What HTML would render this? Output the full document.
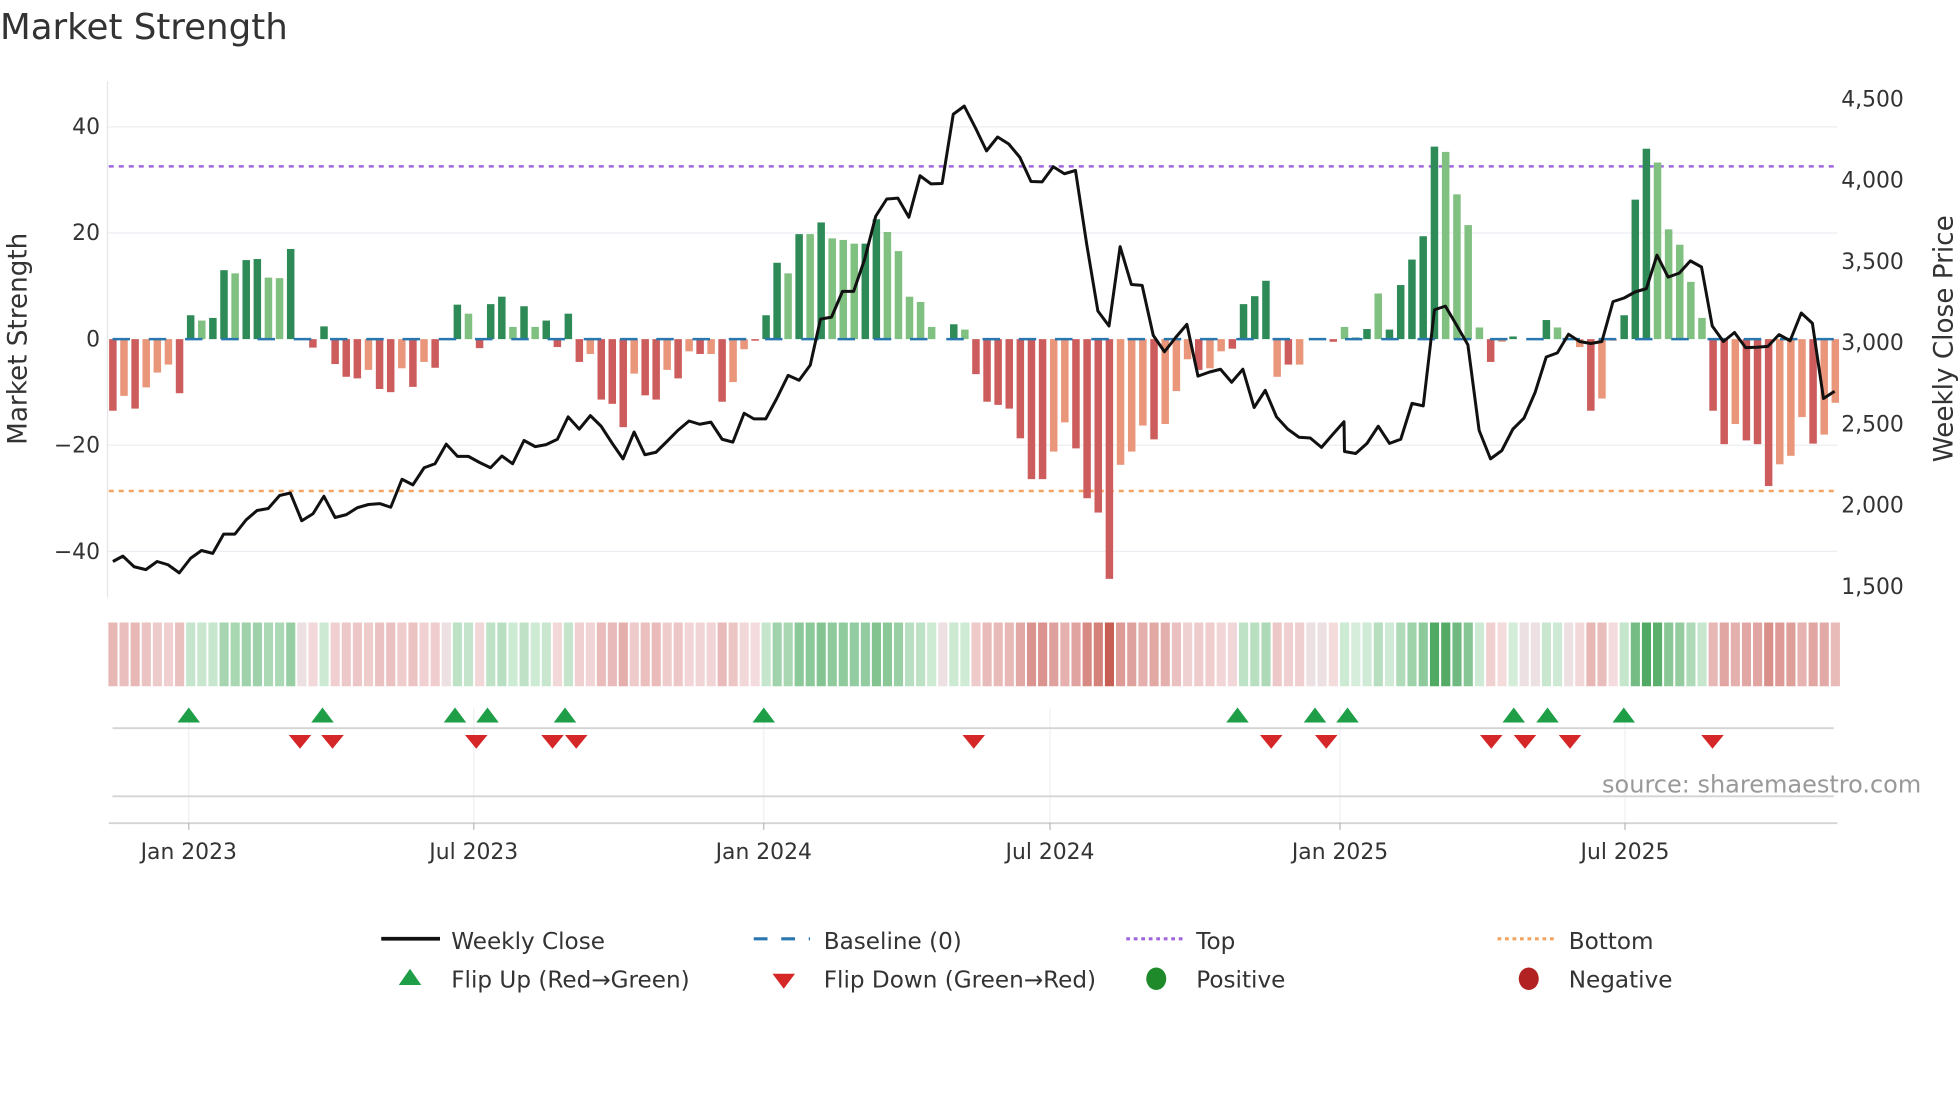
<!DOCTYPE html>
<html><head><meta charset="utf-8"><style>
html,body{margin:0;padding:0;background:#fff;width:1960px;height:1102px;overflow:hidden}
svg{display:block;font-family:"DejaVu Sans","Liberation Sans",sans-serif}
</style></head><body>
<svg id="c" width="1960" height="1102" viewBox="0 0 1568 881.6" xmlns="http://www.w3.org/2000/svg">
<rect width="1568" height="881.6" fill="#fff"/>
<text x="0" y="31" font-size="28.5" fill="#333">Market Strength</text>
<g stroke="#eceef2" stroke-width="1">
<line x1="86" y1="101.5" x2="1470" y2="101.5"/>
<line x1="86" y1="186.4" x2="1470" y2="186.4"/>
<line x1="86" y1="356.2" x2="1470" y2="356.2"/>
<line x1="86" y1="441.1" x2="1470" y2="441.1"/>
</g>
<line x1="86" y1="65" x2="86" y2="478" stroke="#e6e6e6"/>
<g font-size="17.5" fill="#333" text-anchor="end">
<text x="80" y="107">40</text><text x="80" y="192">20</text><text x="80" y="277">0</text>
<text x="80" y="362">−20</text><text x="80" y="447">−40</text>
</g>
<g font-size="17.5" fill="#333">
<text x="1473" y="85">4,500</text><text x="1473" y="150">4,000</text><text x="1473" y="215">3,500</text>
<text x="1473" y="280">3,000</text><text x="1473" y="345">2,500</text><text x="1473" y="410">2,000</text>
<text x="1473" y="475">1,500</text>
</g>
<text transform="translate(21,271) rotate(-90)" font-size="21" fill="#333" text-anchor="middle">Market Strength</text>
<text transform="translate(1562,271) rotate(-90)" font-size="21" fill="#333" text-anchor="middle">Weekly Close Price</text>
<line x1="87" y1="133.1" x2="1470" y2="133.1" stroke="#a066dd" stroke-width="2" stroke-dasharray="4 4"/>
<line x1="87" y1="392.8" x2="1470" y2="392.8" stroke="#f4a460" stroke-width="2" stroke-dasharray="4 4"/>
<g id="bars"></g>
<line x1="90" y1="271.3" x2="1470" y2="271.3" stroke="#2a77b0" stroke-width="2" stroke-dasharray="14 15"/>
<polyline id="price" fill="none" stroke="#111" stroke-width="2.4" stroke-linejoin="round"/>
<g id="strip"></g>
<g stroke="#eef0f3" stroke-width="1">
<line x1="151" y1="566" x2="151" y2="657"/><line x1="379" y1="566" x2="379" y2="657"/>
<line x1="611" y1="566" x2="611" y2="657"/><line x1="840" y1="566" x2="840" y2="657"/>
<line x1="1072" y1="566" x2="1072" y2="657"/><line x1="1300" y1="566" x2="1300" y2="657"/>
</g>
<line x1="90" y1="582.5" x2="1467" y2="582.5" stroke="#d4d4d4" stroke-width="1.5"/>
<line x1="90" y1="637" x2="1467" y2="637" stroke="#d4d4d4" stroke-width="1.5"/>
<line x1="87" y1="658.5" x2="1470" y2="658.5" stroke="#d4d4d4" stroke-width="1.5"/>
<g stroke="#bbb"><line x1="151" y1="658" x2="151" y2="664"/><line x1="379" y1="658" x2="379" y2="664"/><line x1="611" y1="658" x2="611" y2="664"/><line x1="840" y1="658" x2="840" y2="664"/><line x1="1072" y1="658" x2="1072" y2="664"/><line x1="1300" y1="658" x2="1300" y2="664"/></g>
<g id="marks"></g>
<text x="1537" y="634" font-size="19.2" fill="#999" text-anchor="end">source: sharemaestro.com</text>
<g font-size="17.5" fill="#333" text-anchor="middle">
<text x="151" y="687">Jan 2023</text><text x="379" y="687">Jul 2023</text><text x="611" y="687">Jan 2024</text>
<text x="840" y="687">Jul 2024</text><text x="1072" y="687">Jan 2025</text><text x="1300" y="687">Jul 2025</text>
</g>
<g font-size="18.5" fill="#333">
<line x1="305" y1="751" x2="352" y2="751" stroke="#111" stroke-width="3"/>
<text x="361" y="759">Weekly Close</text>
<line x1="603" y1="751" x2="648" y2="751" stroke="#2a77b0" stroke-width="2.5" stroke-dasharray="11 11"/>
<text x="659" y="759">Baseline (0)</text>
<line x1="901" y1="751" x2="946" y2="751" stroke="#a066dd" stroke-width="2.5" stroke-dasharray="3 3"/>
<text x="957" y="759">Top</text>
<line x1="1198" y1="751" x2="1244" y2="751" stroke="#f4a460" stroke-width="2.5" stroke-dasharray="3 3"/>
<text x="1255" y="759">Bottom</text>
<polygon points="319,788 337,788 328,775" fill="#1f9e48"/>
<text x="361" y="790">Flip Up (Red→Green)</text>
<polygon points="618,779 636,779 627,791" fill="#d62728"/>
<text x="659" y="790">Flip Down (Green→Red)</text>
<ellipse cx="925" cy="783" rx="8" ry="9" fill="#1f8a2a"/>
<text x="957" y="790">Positive</text>
<ellipse cx="1223" cy="783" rx="8" ry="9" fill="#b22222"/>
<text x="1255" y="790">Negative</text>
</g>
</svg>
<script>
var NS="http://www.w3.org/2000/svg";
function el(t,a,p){var e=document.createElementNS(NS,t);for(var k in a)e.setAttribute(k,a[k]);document.getElementById(p).appendChild(e);return e;}
var V=[-13.5,-10.7,-13.1,-9.1,-6.3,-4.8,-10.2,4.5,3.5,4,13,12.4,14.9,15.1,11.6,11.5,17,0,-1.6,2.4,-4.7,-7.1,-7.4,-5.8,-9.4,-10,-5.5,-9,-4.3,-5.4,0,6.5,4.8,-1.7,6.6,8,2.3,6.2,2.3,3.5,-1.5,4.8,-4.3,-2.8,-11.4,-12.2,-16.6,-6.5,-10.6,-11.4,-5.8,-7.4,-2.3,-2.8,-2.8,-11.8,-8.1,-1.9,-0.3,4.5,14.4,12.4,19.8,19.8,22,19,18.7,18,18,22.6,20.2,16.6,8,7,2.3,0,2.8,1.8,-6.6,-11.8,-12.4,-13.1,-18.7,-26.4,-26.4,-21.2,-15.7,-20.6,-30,-32.7,-45.2,-23.7,-21.2,-16.3,-18.9,-16,-9.8,-3.8,-5.8,-5.5,-2.3,-1.8,6.6,8.1,11,-7.1,-4.8,-4.8,0,0,-0.5,2.3,0.3,1.9,8.6,1.8,10.2,15,19.4,36.3,35.3,27.3,21.5,2.2,-4.3,-0.5,0.5,0,0,3.6,2.2,0,-1.5,-13.5,-11.2,-0.3,4.5,26.3,35.9,33.3,20.7,17.8,10.8,4,-13.5,-19.8,-16,-19.1,-19.8,-27.7,-23.6,-22,-14.7,-19.7,-18,-12];
var D="DLDLLLDDLDDLDDLLD0DDDDDLDDLDLD0DLDDDLDLDDDDLDDDLDDLDLDLDLLDDDLDLDLLLDDLLLLL0DLDDDDDDDLLDDDDLLLDLLLDLLDDDDLD00DDLDDLDDDDDLLLLDLD00DL0LDLLDDDLLLLLDDLDDDLLLDLL";
var Z=271.3,U=4.243,X0=90.3,DX=8.89;
function cx(i){var x=X0+DX*i; if(i>40&&i<125){x-=3*Math.sin((i-40)/85*Math.PI);} return x;}
for(var i=0;i<V.length;i++){
 var v=V[i],d=D[i]==="D",x=cx(i);
 if(v!==0){var h=Math.abs(v)*U;var col=v>0?(d?"#2e8b57":"#80c080"):(d?"#cd5c5c":"#e9967a");
 el("rect",{x:x-3,y:v>0?Z-h:Z,width:6,height:h,fill:col},"bars");}
 var t,c;
 if(v>0){t=Math.min(1,v/36);c=[214+(80-214)*t,238+(170-238)*t,219+(100-219)*t];}
 else if(v<0){t=Math.min(1,-v/45);c=[244+(200-244)*t,220+(95-220)*t,222+(85-222)*t];}
 else{c=[236,224,226];}
 el("rect",{x:x-3.6,y:498,width:7.3,height:51,fill:"rgb("+c.map(Math.round).join(",")+")"},"strip");
}
var P1=[[31,1230],[55,1217],[82,1243],[110,1250],[137,1230],[163,1238],[190,1258],[217,1222],[243,1203],[270,1210],[296,1163],[323,1163],[350,1128],[376,1105],[403,1100],[430,1068],[456,1062],[483,1130],[510,1113],[536,1070],[563,1122],[590,1115],[616,1098],[643,1090],[670,1088],[696,1097],[723,1028],[749,1042],[776,1000],[802,990],[829,942],[856,972],[882,972],[909,987],[935,1000],[962,971],[988,990],[1015,933],[1042,948],[1068,943],[1095,930],[1121,875],[1148,905],[1175,872],[1201,898],[1228,940],[1254,978],[1281,912],[1307,968],[1334,962],[1361,935],[1387,908],[1414,885],[1440,893],[1467,888],[1494,930],[1520,937]];
var P2=[[5,866],[30,880],[60,880],[88,830],[117,773],[145,785],[173,748],[199,635],[227,630],[255,567],[283,567],[311,488],[339,382],[367,340],[395,338],[423,385],[451,283],[479,303],[507,302],[535,132],[563,112],[591,165],[619,222],[647,188],[675,205],[703,238],[731,297],[759,298],[787,261],[815,278],[843,270],[871,450],[899,615],[927,652],[955,457],[983,550],[1010,552],[1038,675],[1066,715],[1094,680],[1122,648],[1150,775],[1178,765],[1206,758],[1234,790],[1262,758],[1290,852],[1318,810],[1346,875],[1374,905],[1402,925],[1430,927],[1458,950],[1486,918],[1514,887]];
var P3=[[22,960],[50,965],[78,940],[106,898],[134,940],[162,930],[190,842],[218,848],[246,612],[273,603],[301,650],[329,698],[357,908],[385,978],[413,958],[441,905],[469,878],[497,815],[525,728],[553,718],[581,672],[609,690],[637,695],[665,690],[693,592],[721,583],[749,568],[777,560],[804,478],[832,532],[860,522],[888,492],[916,507],[943,652],[971,690],[999,668],[1027,705],[1055,704],[1083,702],[1111,673],[1139,688],[1167,620],[1195,645],[1223,830],[1251,812]];
function yy(z){return 101.5+(z-163)/3.069;}
var pts=[];
P1.forEach(function(p){pts.push([cx((p[0]-31)/26.6),yy(p[1])]);});
P2.forEach(function(p){pts.push([cx(57+(p[0]-5)/27.97),yy(p[1])]);});
P3.forEach(function(p){pts.push([cx(111+(p[0]-22)/27.97),yy(p[1])]);});
document.getElementById("price").setAttribute("points",pts.map(function(p){return p[0].toFixed(1)+","+p[1].toFixed(1);}).join(" "));
[151,258,364,390,452,611,990,1052,1078,1211,1238,1299].forEach(function(x){el("polygon",{points:(x-9)+",578 "+(x+9)+",578 "+x+",566",fill:"#1f9e48"},"marks");});
[240,266,381,442,461,779,1017,1061,1193,1220,1256,1370].forEach(function(x){el("polygon",{points:(x-9)+",588 "+(x+9)+",588 "+x+",599",fill:"#d62728"},"marks");});
</script>
</body></html>
